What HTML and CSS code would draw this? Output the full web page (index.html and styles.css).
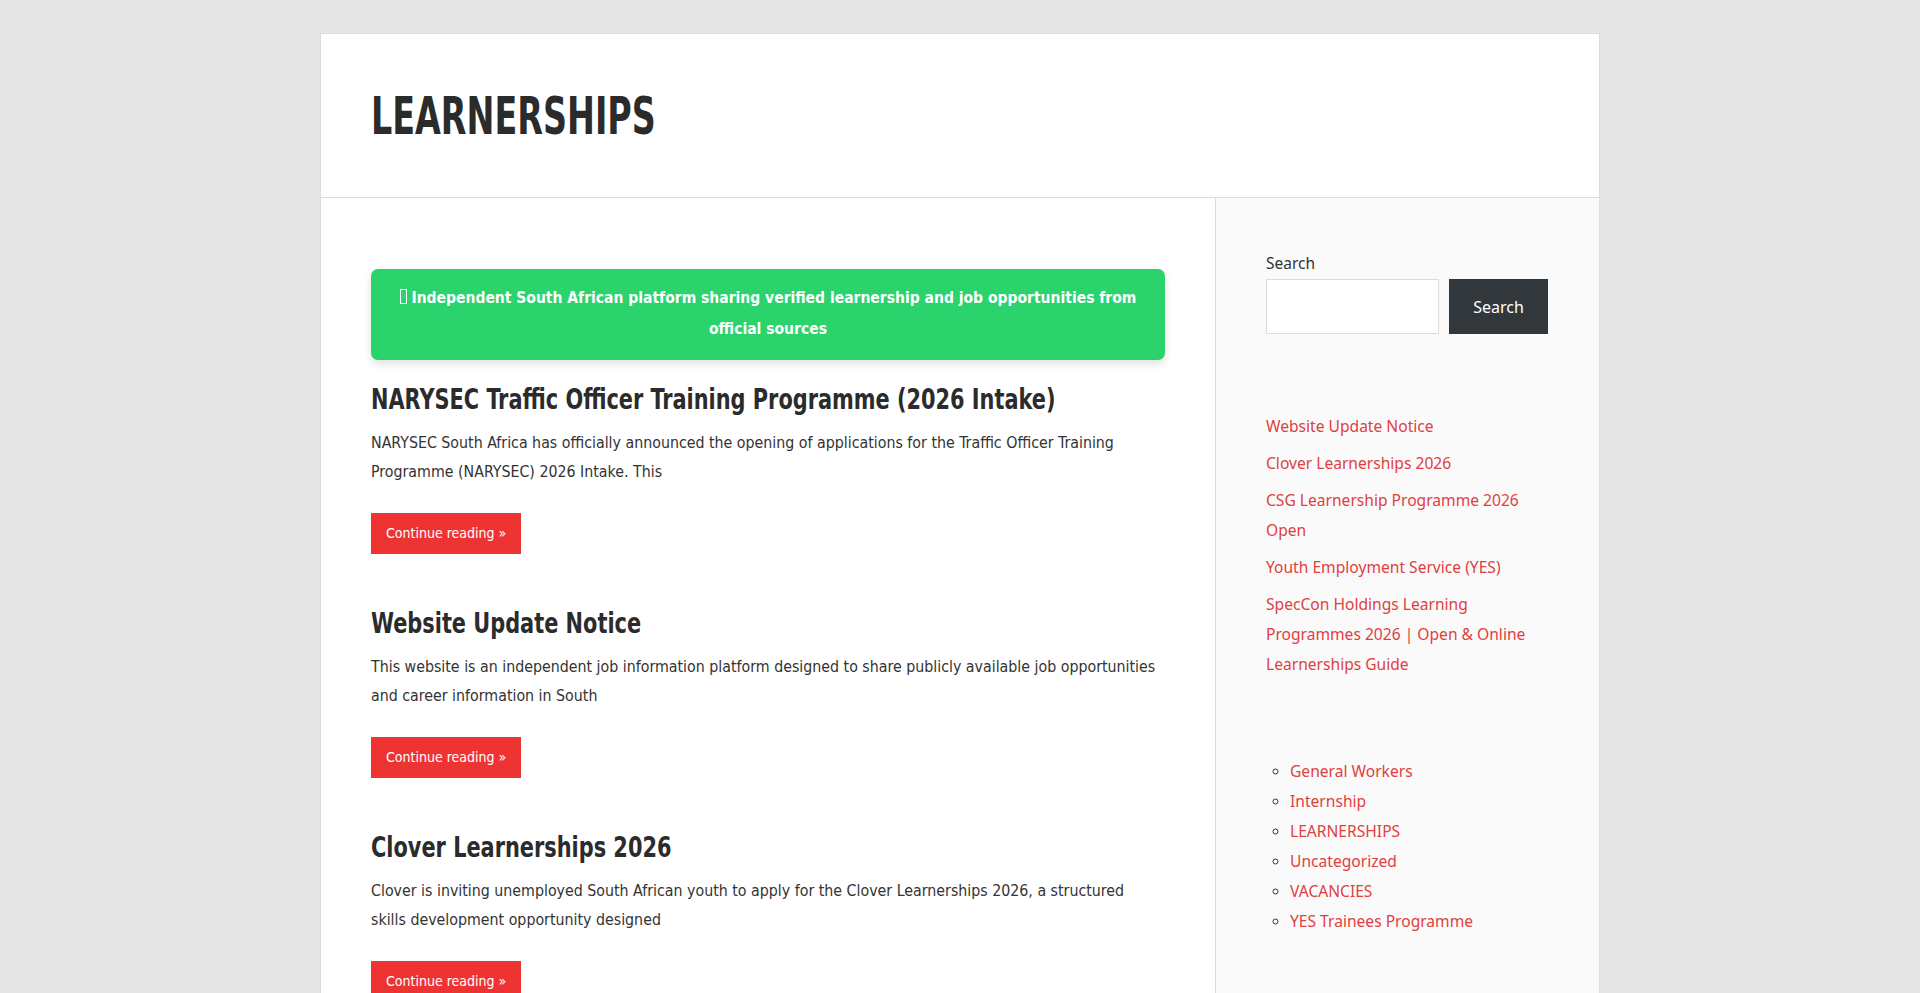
FILE: index.html
```html
<!DOCTYPE html>
<html lang="en">
<head>
<meta charset="utf-8">
<title>LEARNERSHIPS</title>
<link rel="stylesheet" href="styles.css">
</head>
<body>
<div class="site">
  <header class="site-header">
    <h1 class="site-title">LEARNERSHIPS</h1>
  </header>
  <div class="site-content">
    <main class="main">
      <div class="notice"><span class="tofu"></span> Independent South African platform sharing verified learnership and job opportunities from official sources</div>

      <article class="post">
        <h2 class="post-title">NARYSEC Traffic Officer Training Programme (2026 Intake)</h2>
        <p class="excerpt">NARYSEC South Africa has officially announced the opening of applications for the Traffic Officer Training Programme (NARYSEC) 2026 Intake. This</p>
        <a class="more" href="#">Continue reading »</a>
      </article>

      <article class="post">
        <h2 class="post-title">Website Update Notice</h2>
        <p class="excerpt">This website is an independent job information platform designed to share publicly available job opportunities and career information in South</p>
        <a class="more" href="#">Continue reading »</a>
      </article>

      <article class="post">
        <h2 class="post-title">Clover Learnerships 2026</h2>
        <p class="excerpt">Clover is inviting unemployed South African youth to apply for the Clover Learnerships 2026, a structured skills development opportunity designed</p>
        <a class="more" href="#">Continue reading »</a>
      </article>
    </main>

    <aside class="sidebar">
      <div class="search">
        <label class="search-label">Search</label>
        <div class="search-row">
          <input class="search-input" type="text">
          <button class="search-btn">Search</button>
        </div>
      </div>

      <ul class="recent">
        <li><a href="#">Website Update Notice</a></li>
        <li><a href="#">Clover Learnerships 2026</a></li>
        <li><a href="#">CSG Learnership Programme 2026 Open</a></li>
        <li><a href="#">Youth Employment Service (YES)</a></li>
        <li><a href="#">SpecCon Holdings Learning Programmes 2026 | Open &amp; Online Learnerships Guide</a></li>
      </ul>

      <ul class="cats">
        <li><a href="#">General Workers</a></li>
        <li><a href="#">Internship</a></li>
        <li><a href="#">LEARNERSHIPS</a></li>
        <li><a href="#">Uncategorized</a></li>
        <li><a href="#">VACANCIES</a></li>
        <li><a href="#">YES Trainees Programme</a></li>
      </ul>
    </aside>
  </div>
</div>
</body>
</html>
```

FILE: styles.css
```css
html, body {
  margin: 0;
  padding: 0;
}
body {
  background: #e5e5e5;
  padding-top: 33px;
  font-family: "DejaVu Sans Condensed", "Liberation Sans", sans-serif;
  color: #333;
}
.site {
  width: 1280px;
  margin: 0 auto;
  background: #fff;
  border: 1px solid #dcdcdc;
  border-bottom: none;
  box-sizing: border-box;
}
.site-header {
  height: 163px;
  padding-left: 50px;
  display: flex;
  align-items: center;
  border-bottom: 1px solid #dcdcdc;
}
.site-title {
  margin: 0;
  font-size: 52px;
  font-weight: 700;
  color: #2b2b2b;
  line-height: 1;
  white-space: nowrap;
  transform: scaleX(0.713);
  transform-origin: left center;
}
.site-content {
  display: flex;
  min-height: 800px;
}
.main {
  width: 894px;
  flex: 0 0 894px;
  box-sizing: border-box;
  padding: 71px 50px 0 50px;
}
.notice {
  background: #2ad36b;
  color: #fff;
  font-weight: 700;
  font-size: 15.5px;
  line-height: 31px;
  text-align: center;
  padding: 14px 20px 15px;
  border-radius: 7px;
  box-shadow: 0 4px 8px rgba(0, 0, 0, 0.12);
  margin-bottom: 19px;
}
.tofu {
  display: inline-block;
  width: 5px;
  height: 13px;
  border: 1px solid #fff;
  vertical-align: -1px;
}
.post {
  margin-bottom: 49px;
}
.post-title {
  margin: 0 0 9px;
  font-size: 29px;
  line-height: 40px;
  font-weight: 700;
  color: #2b2b2b;
  white-space: nowrap;
  transform: scaleX(0.80);
  transform-origin: left center;
}
.excerpt {
  margin: 0 0 27px;
  max-width: 788px;
  font-size: 15.8px;
  line-height: 29px;
  color: #333;
}
.more {
  display: inline-block;
  background: #ee3333;
  color: #fff;
  text-decoration: none;
  font-size: 14px;
  height: 41px;
  line-height: 41px;
  padding: 0 15px;
}
.sidebar {
  flex: 1 1 auto;
  min-width: 0;
  background: #fafafa;
  border-left: 1px solid #dcdcdc;
  padding: 53px 51px 0 50px;
  font-family: "Noto Sans", "Open Sans", sans-serif;
}
.search-label {
  display: block;
  font-size: 15.5px;
  line-height: 24px;
  color: #333;
  margin-bottom: 4px;
}
.search-row {
  display: flex;
  gap: 10px;
}
.search-input {
  width: 173px;
  height: 55px;
  flex: 0 0 173px;
  box-sizing: border-box;
  border: 1px solid #dcdcdc;
  background: #fff;
  margin: 0;
  padding: 0 8px;
}
.search-btn {
  width: 99px;
  height: 55px;
  flex: 0 0 99px;
  border: none;
  background: #32373c;
  color: #fff;
  font-family: "Noto Sans", "Open Sans", sans-serif;
  font-size: 16px;
  margin: 0;
  padding: 0;
}
.recent {
  list-style: none;
  margin: 77px 0 0;
  padding: 0;
}
.recent li {
  font-size: 15.6px;
  line-height: 30px;
  margin-bottom: 7px;
}
.sidebar a {
  color: #e04040;
  text-decoration: none;
}
.cats {
  list-style: circle;
  margin: 77px 0 0;
  padding-left: 24px;
}
.cats li {
  font-size: 15.6px;
  line-height: 30px;
}
.cats li::marker {
  color: #333;
  font-size: 14px;
}
```
